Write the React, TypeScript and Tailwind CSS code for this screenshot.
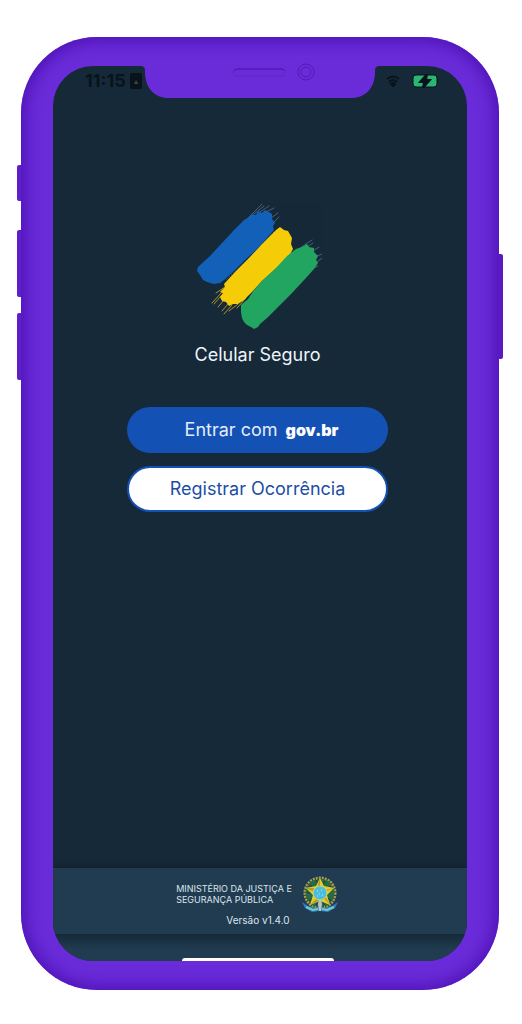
import type { ReactNode } from "react";

// Pinceladas com bordas irregulares
function Logo() {
  return (
    <svg width="128" height="128" viewBox="0 0 128 128" fill="none" role="img" aria-label="Celular Seguro">
      <g stroke="#5b7390" strokeWidth="1" strokeLinecap="round" opacity="0.75">
        <path d="M54 16L68 2M60 12L70 4M66 10L75 4M72 10L80 6M77 16L84 11M79 21L85 15" />
        <path d="M106 46L118 38M113 45L119 41M119 49L125 45M121 55L128 52M122 61L128 56M120 66L124 64" />
      </g>
      <g stroke="#7f93a6" strokeWidth="1" strokeDasharray="1 2" opacity="0.8">
        <path d="M80 30L66 45L50 61L32 78" />
        <path d="M100 49L84 62L67 77L56 90L46 103" />
      </g>
      <path
        d="M3 69L4 65L16 54L28 41L41 27L50 18L55 15L58 12L62 13L64 9L68 11L71 8L75 10L78 12L78 17L81 21L79 24L80 28L73 36L62 48L50 59L40 69L30 78L26 81L20 82L13 80L9 78L6 73Z"
        fill="#1260b8"
      />
      <path
        d="M34 83L22 91M29 89L18 101M27 94L20 102M30 98L24 105M34 102L28 109M38 103L30 112M44 102L35 109M52 96L43 106"
        stroke="#a99331"
        strokeLinecap="round"
      />
      <path
        d="M26 95L29 91L26 90L31 85L30 82L42 69L56 55L68 42L77 33L82 28L86 25L90 28L94 29L98 36L97 42L99 47L95 54L88 61L78 70L68 79L58 90L50 98L44 102L39 102L35 104L32 100L28 99Z"
        fill="#f5cc08"
      />
      <path
        d="M47 103L54 97L60 88L69 78L82 66L93 54L102 47L108 45L113 42L115 45L120 46L120 50L124 54L122 58L124 61L120 67L111 77L98 91L85 104L73 116L66 122L64 125L60 127L57 125L53 123L50 120L48 116L47 110Z"
        fill="#22a561"
      />
    </svg>
  );
}

function CoatOfArms() {
  return (
    <svg width="40" height="38" viewBox="0 0 40 38" role="img" aria-label="Brasão da República">
      <circle cx="20" cy="18" r="15" fill="none" stroke="#aa9d4c" strokeWidth="3" strokeDasharray="2 1" />
      <circle cx="20" cy="18" r="11" fill="none" stroke="#276b41" strokeWidth="7" strokeDasharray="6 1" />
      <path d="M20 3L24 11L34 13L27 20L30 30L20 26L10 30L13 20L6 13L16 11Z" fill="#e9c92b" />
      <path d="M20 3L17 13L20 17ZM34 13L25 15L22 18ZM30 30L25 21L20 19ZM10 30L20 25V20ZM6 13L16 18L14 13Z" fill="#b39a35" />
      <circle cx="20" cy="18" r="7" fill="#48bfdc" stroke="#d7d06a" />
      <path d="M17 16H18M21 15H22M19 19H20M22 20H23M17 21H18" stroke="#b9e8ef" />
      <path d="M2 27L8 31L16 33L20 31L24 33L32 31L38 27L35 33L28 37L20 36L12 37L5 33Z" fill="#3478c9" />
      <path d="M6 32L13 35L18 34M34 32L27 35L22 34" stroke="#6fd0c0" strokeWidth="2" fill="none" />
      <path d="M19 25H21L22 29L21 36H19L18 29Z" fill="#b9c3cc" />
    </svg>
  );
}

function Notch() {
  return (
    <svg className="overflow-visible" width="238" height="32" viewBox="0 0 238 32" fill="none" aria-hidden="true">
      <path
        d="M0 0H238Q234 0 234 5V8C233 22 225 32 210 32H28C13 32 5 22 4 8V5Q4 0 0 0Z"
        fill="#6a2cd9"
      />
      <rect x="92" y="3" width="52" height="7" rx="3" stroke="#5f24cb" />
      <path d="M93 5Q94 3 97 3H140Q143 3 144 5" stroke="#4a12ab" />
      <circle cx="165" cy="6" r="8" stroke="#5418bb" />
      <circle cx="165" cy="6" r="5" stroke="#5418bb" />
    </svg>
  );
}

function StatusIcons() {
  return (
    <div className="flex items-center gap-3">
      <svg width="14" height="12" viewBox="0 0 14 12" fill="none" stroke="#08131c" strokeWidth="2" aria-label="Wi-Fi">
        <path d="M1 4Q7 -1 13 4M3 7Q7 3 11 7" />
        <path d="M5 9Q7 7 9 9L7 11Z" fill="#08131c" strokeWidth="2" />
      </svg>
      <svg width="27" height="14" viewBox="0 0 27 14" aria-label="Bateria">
        <rect x="1" y="1" width="24" height="12" rx="3" fill="#2bb673" stroke="#08131c" />
        <path d="M25 5Q27 7 25 9Z" fill="#08131c" />
        <path d="M15 0L8 8H12L11 14L18 6H14Z" fill="#08131c" stroke="#08131c" strokeWidth="2" />
      </svg>
    </div>
  );
}

function PhoneFrame({ children }: { children: ReactNode }) {
  return (
    <div className="relative flex w-full max-w-[478px] flex-1 flex-col">
      {/* botões laterais */}
      <span className="absolute top-[128px] -left-1 h-9 w-2 rounded-l-xs bg-[#601ecb]" />
      <span className="absolute top-[193px] -left-1 h-[67px] w-2 rounded-l-xs bg-[#601ecb]" />
      <span className="absolute top-[276px] -left-1 h-[67px] w-2 rounded-l-xs bg-[#601ecb]" />
      <span className="absolute top-[217px] -right-1 h-[105px] w-2 rounded-r-xs bg-[#5a19c2]" />
      <div className="relative flex flex-1 flex-col rounded-[76px] bg-[#6a2cd9] px-8 py-[29px] shadow-[inset_0_0_18px_3px_#4b0eb0]">
        <div className="relative flex flex-1 flex-col overflow-hidden rounded-[40px] bg-[#162938]">
          {children}
        </div>
        <div className="absolute top-[29px] left-1/2 -translate-x-1/2">
          <Notch />
        </div>
      </div>
    </div>
  );
}

export default function App() {
  return (
    <div className="flex min-h-screen flex-col items-center bg-white pt-[37px] pr-[23px] pb-[34px] pl-[21px] font-[Inter,'Noto_Sans',sans-serif]">
      <PhoneFrame>
        <header className="flex h-[30px] items-center justify-between pr-7 pl-8 text-[#08131c]">
          <div className="flex items-center gap-1">
            <span className="text-lg leading-none font-bold">11:15</span>
            <span className="flex h-4 w-3 items-center justify-center rounded-xs bg-[#08131c] text-[8px] text-[#3b4a50]">▴</span>
          </div>
          <StatusIcons />
        </header>

        <main className="flex flex-1 flex-col items-center pt-[106px] pr-[79px] pl-[74px]">
          <Logo />
          <h1 className="mt-[11px] text-lg leading-7 text-[#eef4f8]">Celular Seguro</h1>
          <div className="mt-[38px] flex w-full flex-col gap-[13px]">
            <button
              type="button"
              className="flex h-[46px] items-center justify-center gap-2 rounded-full bg-[#1351b4] pl-2 text-lg text-[#e3edf8]"
            >
              Entrar com <span className="text-base font-black text-white">gov.br</span>
            </button>
            <button
              type="button"
              className="h-[46px] rounded-full border-2 border-[#1351b4] bg-white text-lg text-[#1b4fa6]"
            >
              Registrar Ocorrência
            </button>
          </div>
        </main>

        <footer className="bg-[#213c51] text-[#dbe5ed] shadow-[0_-2px_4px_#12232f]">
          <div className="flex h-[66px] flex-col items-center pt-[7px] pr-1">
            <div className="flex items-center gap-2">
              <p className="text-[9px] leading-[11px]">
                MINISTÉRIO DA JUSTIÇA E
                <br />
                SEGURANÇA PÚBLICA
              </p>
              <CoatOfArms />
            </div>
            <p className="text-[10px] leading-[14px]">Versão v1.4.0</p>
          </div>
          <div className="flex h-[27px] items-end justify-center bg-linear-to-b from-[#152a39] to-[#213c51] to-60% pr-1">
            <span className="h-[3px] w-[152px] rounded-t-full bg-white" />
          </div>
        </footer>
      </PhoneFrame>
    </div>
  );
}
